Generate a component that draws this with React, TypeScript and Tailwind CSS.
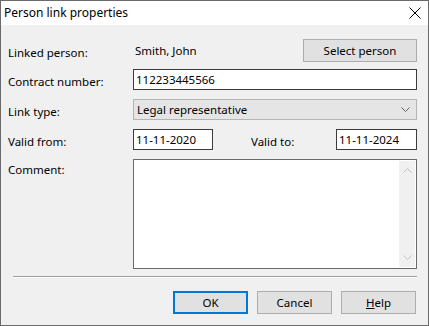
import React from "react";

// small chevron used by the combo box and the scrollbar arrows
const Chevron = ({ up = false, color = "#606060" }: { up?: boolean; color?: string }) => (
  <svg width="9" height="5" viewBox="0 0 9 5" className="block">
    <path
      d={up ? "M0.5 4.5 L4.5 0.5 L8.5 4.5" : "M0.5 0.5 L4.5 4.5 L8.5 0.5"}
      fill="none"
      stroke={color}
      strokeWidth="1"
    />
  </svg>
);

const Label = ({ children }: { children: React.ReactNode }) => (
  <span className="text-[11.5px] leading-none text-black">{children}</span>
);

const Button = ({
  children,
  primary = false,
  className = "",
}: {
  children: React.ReactNode;
  primary?: boolean;
  className?: string;
}) => (
  <button
    className={
      "h-[23px] bg-[#e1e1e1] text-[11.5px] leading-none text-black flex items-center justify-center " +
      (primary ? "border-2 border-[#0078d7] " : "border border-[#adadad] ") +
      className
    }
  >
    {children}
  </button>
);

export default function App() {
  return (
    <div
      className="w-[429px] h-[326px] border border-[#6a6a6a] bg-[#f0f0f0] flex flex-col overflow-hidden"
      style={{ fontFamily: '"Noto Sans", "Open Sans", sans-serif' }}
    >
      {/* TITLE BAR */}
      <div className="h-[24px] bg-white flex items-center justify-between pl-[3px] pr-[6px] shrink-0">
        <span className="text-[12px] text-black leading-none">Person link properties</span>
        <svg width="12" height="12" viewBox="0 0 12 12" className="mr-[1px]">
          <path d="M0.5 0.5 L11.5 11.5 M11.5 0.5 L0.5 11.5" stroke="#000" strokeWidth="1" />
        </svg>
      </div>

      {/* FORM */}
      <div className="flex flex-col pl-[7px] pr-[11px] pt-[14px]">
        {/* linked person */}
        <div className="flex items-center h-[23px]">
          <div className="w-[125px]">
            <Label>Linked person:</Label>
          </div>
          <span className="pl-[2px] text-[11.5px] leading-none text-black">Smith, John</span>
          <Button className="ml-auto w-[114px]">Select person</Button>
        </div>

        {/* contract number */}
        <div className="flex items-center mt-[7px] h-[21px]">
          <div className="w-[125px]">
            <Label>Contract number:</Label>
          </div>
          <div className="flex-1 h-full bg-white border border-[#3c3c3c] flex items-center px-[2px]">
            <span className="text-[11.5px] leading-none text-black">112233445566</span>
          </div>
        </div>

        {/* link type */}
        <div className="flex items-center mt-[9px] h-[21px]">
          <div className="w-[125px]">
            <Label>Link type:</Label>
          </div>
          <div className="flex-1 h-full bg-[#e5e5e5] border border-[#b4b4b4] flex items-center pl-[3px] pr-[6px]">
            <span className="text-[11.5px] leading-none text-black">Legal representative</span>
            <span className="ml-auto">
              <Chevron />
            </span>
          </div>
        </div>

        {/* valid dates */}
        <div className="flex items-center mt-[9px] h-[21px]">
          <div className="w-[125px]">
            <Label>Valid from:</Label>
          </div>
          <div className="w-[80px] h-full bg-white border border-[#3c3c3c] flex items-center px-[2px]">
            <span className="text-[11.5px] leading-none text-black">11-11-2020</span>
          </div>
          <div className="ml-[38px]">
            <Label>Valid to:</Label>
          </div>
          <div className="ml-auto w-[81px] h-full bg-white border border-[#3c3c3c] flex items-center px-[2px]">
            <span className="text-[11.5px] leading-none text-black">11-11-2024</span>
          </div>
        </div>

        {/* comment */}
        <div className="flex mt-[9px] h-[110px]">
          <div className="w-[125px] pt-[5px] text-[11.5px] leading-none">
            <Label>Comment:</Label>
          </div>
          <div className="flex-1 h-full bg-white border border-[#6a6a6a] flex justify-end p-[1px]">
            <div className="w-[16px] h-full bg-[#f0f0f0] flex flex-col items-center justify-between py-[7px]">
              <Chevron up color="#c2c2c2" />
              <Chevron color="#c2c2c2" />
            </div>
          </div>
        </div>

        {/* separator */}
        <div className="mt-[7px] ml-[5px] border-t border-[#a0a0a0] border-b border-b-white" />

        {/* buttons */}
        <div className="flex justify-end gap-[9px] mt-[13px] pr-[1px]">
          <Button primary className="w-[75px]">
            OK
          </Button>
          <Button className="w-[75px]">Cancel</Button>
          <Button className="w-[75px]">
            <span>
              <span className="underline">H</span>elp
            </span>
          </Button>
        </div>
      </div>
    </div>
  );
}
